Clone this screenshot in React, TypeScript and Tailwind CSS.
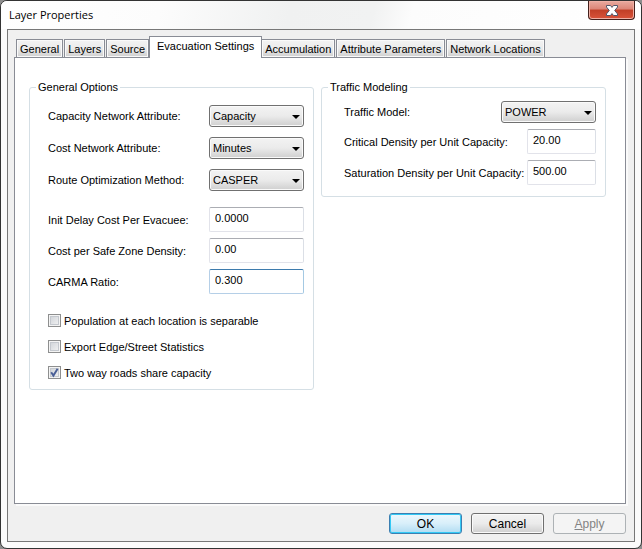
import { useState } from "react";

const tabs = [
  "General",
  "Layers",
  "Source",
  "Evacuation Settings",
  "Accumulation",
  "Attribute Parameters",
  "Network Locations",
];

const raised = "bg-linear-to-b from-[#f3f3f3] from-0% via-[#ebebeb] via-50% to-[#cfcfcf]";

function SelectRow({ id, label, options }: { id: string; label: string; options: string[] }) {
  return (
    <div className="flex items-center justify-between">
      <label htmlFor={id}>{label}</label>
      <div className="relative">
        <select
          id={id}
          className={`block h-[22px] w-[95px] appearance-none rounded-[3px] border border-[#707070] pr-4 pl-[3px] shadow-[inset_0_0_0_1px_#fafafa] ${raised}`}
        >
          {options.map((o) => (
            <option key={o}>{o}</option>
          ))}
        </select>
        <svg className="pointer-events-none absolute top-[10px] right-[4px]" width="8" height="4" viewBox="0 0 8 4" aria-hidden="true">
          <path d="M0 0h8L4 4z" fill="#000" />
        </svg>
      </div>
    </div>
  );
}

function InputRow({ id, label, value, size, active }: { id: string; label: string; value: string; size: string; active?: boolean }) {
  const edge = active
    ? "border-[#b5cfe7] border-t-[#3d7bad] border-r-[#a4c9e3]"
    : "border-[#e2e3ea] border-t-[#abadb3] border-r-[#dbdfe6]";
  return (
    <div className="flex items-center justify-between">
      <label htmlFor={id}>{label}</label>
      <input
        id={id}
        type="text"
        defaultValue={value}
        className={`block h-[25px] rounded-[2px] border bg-white pb-1 pl-[5px] outline-none ${size} ${edge}`}
      />
    </div>
  );
}

function CheckRow({ label, checked }: { label: string; checked?: boolean }) {
  return (
    <label className="flex h-[13px] items-center gap-[3px]">
      <span className="relative block size-[13px]">
        <input
          type="checkbox"
          defaultChecked={checked}
          className="peer block size-[13px] appearance-none border border-[#8e8f8f] bg-linear-to-br from-[#cbcfd5] to-[#f6f6f6] shadow-[inset_0_0_0_1px_#f4f4f4,inset_0_0_0_2px_#c4c8ce]"
        />
        <svg className="pointer-events-none absolute inset-0 hidden peer-checked:block" width="13" height="13" viewBox="0 0 13 13" aria-hidden="true">
          <path d="M3.2 6.2 L5.4 9.6 L9.6 2.8" fill="none" stroke="#4a5f97" strokeWidth="1.9" />
        </svg>
      </span>
      {label}
    </label>
  );
}

const group = "min-w-0 rounded-[3px] border border-[#d5dfe5]";
const dialogButton = "h-[21px] w-[73px] rounded-[3px] border text-[12px] leading-none";

export default function App() {
  const [current, setCurrent] = useState("Evacuation Settings");

  return (
    <div className="bg-[#8d8d8d] font-['Liberation_Sans',Arial,sans-serif] text-[11px] leading-[14px] text-black">
      <div className="flex min-h-screen flex-col rounded-[7px] border border-[#333] bg-[#fbfbfb]">
        <header className="flex h-7 items-start justify-between rounded-t-[6px] bg-linear-[105deg,#fff_0%,#fcfcfc_25%,#f0f1f1_45%,#f1f2f2_58%,#fcfcfc_64%,#fff_100%] pr-[6px] pl-2">
          <h1 className="pt-[6px] font-['Open_Sans','Noto_Sans',sans-serif] text-[11px] leading-4">Layer Properties</h1>
          <button
            type="button"
            aria-label="Close"
            className="flex h-[19px] w-[47px] items-center justify-center rounded-b-[4px] border border-t-0 border-[#43201c] bg-linear-[180deg,#e9aba0_0%,#dc8577_45%,#c13f27_50%,#d9533a_100%] shadow-[inset_0_0_0_1px_#efb0a5]"
          >
            <svg width="12" height="11" viewBox="0 0 12 11" aria-hidden="true">
              <path d="M.5.5h4L6 2.4 7.5.5h4v1.6L8.7 5.5l2.8 3.4v1.6h-4L6 8.6l-1.5 1.9h-4V8.9l2.8-3.4L.5 2.1z" fill="#fff" stroke="#50576a" />
            </svg>
          </button>
        </header>

        <main className="mx-[6px] mb-[6px] flex grow flex-col border border-[#777] bg-[#f0f0f0] pt-[7px] pr-2 pb-[7px] pl-[6px]">
          <div role="tablist" className="flex h-5 items-end pl-[2px]">
            {tabs.map((tab) => {
              const active = tab === current;
              return (
                <button
                  key={tab}
                  type="button"
                  role="tab"
                  aria-selected={active}
                  onClick={() => setCurrent(tab)}
                  className={
                    active
                      ? "relative z-10 -mx-px -mb-px h-[22px] border border-b-0 border-[#898c95] bg-white px-[7px] pb-[3px]"
                      : `mr-px h-[18px] border border-b-0 border-[#898c95] px-[3px] shadow-[inset_0_0_0_1px_#fafafa] ${raised}`
                  }
                >
                  {tab}
                </button>
              );
            })}
          </div>

          <section role="tabpanel" className="grow border border-[#898c95] bg-white shadow-[2px_2px_0_#fafafa]">
            <div className="grid grid-cols-2 items-start gap-[7px] pt-[22px] pr-[19px] pl-[14px]">
              <fieldset className={`${group} pr-[9px] pb-[10px] pl-[18px]`}>
                <legend className="-ml-3 px-[2px]">General Options</legend>
                <div className="flex flex-col gap-[10px] pt-[11px]">
                  <SelectRow id="capacity" label="Capacity Network Attribute:" options={["Capacity"]} />
                  <SelectRow id="cost" label="Cost Network Attribute:" options={["Minutes"]} />
                  <SelectRow id="method" label="Route Optimization Method:" options={["CASPER"]} />
                </div>
                <div className="flex flex-col gap-[6px] pt-[16px]">
                  <InputRow id="delay" label="Init Delay Cost Per Evacuee:" value="0.0000" size="w-[95px]" />
                  <InputRow id="safe" label="Cost per Safe Zone Density:" value="0.00" size="w-[95px]" />
                  <InputRow id="carma" label="CARMA Ratio:" value="0.300" size="w-[95px]" active />
                </div>
                <div className="flex flex-col gap-[13px] pt-5">
                  <CheckRow label="Population at each location is separable" />
                  <CheckRow label="Export Edge/Street Statistics" />
                  <CheckRow label="Two way roads share capacity" checked />
                </div>
              </fieldset>

              <fieldset className={`${group} pr-[9px] pb-[11px] pl-[22px]`}>
                <legend className="-ml-4 px-[2px]">Traffic Modeling</legend>
                <div className="flex flex-col gap-[6px] pt-[7px]">
                  <SelectRow id="model" label="Traffic Model:" options={["POWER"]} />
                  <InputRow id="critical" label="Critical Density per Unit Capacity:" value="20.00" size="w-[69px]" />
                  <InputRow id="saturation" label="Saturation Density per Unit Capacity:" value="500.00" size="w-[69px]" />
                </div>
              </fieldset>
            </div>
          </section>

          <footer className="flex justify-end gap-[9px] pt-[9px]">
            <button type="button" className={`${dialogButton} border-[#3c7fb1] bg-linear-to-b from-[#eef8fd] via-[#d8effa] to-[#b0dcf2] shadow-[inset_0_0_0_1px_#33c9f5]`}>
              OK
            </button>
            <button type="button" className={`${dialogButton} border-[#707070] shadow-[inset_0_0_0_1px_#fafafa] ${raised}`}>
              Cancel
            </button>
            <button type="button" disabled className={`${dialogButton} border-[#adb2b5] bg-[#f4f4f4] text-[#838383]`}>
              <span className="underline">A</span>pply
            </button>
          </footer>
        </main>
      </div>
    </div>
  );
}
